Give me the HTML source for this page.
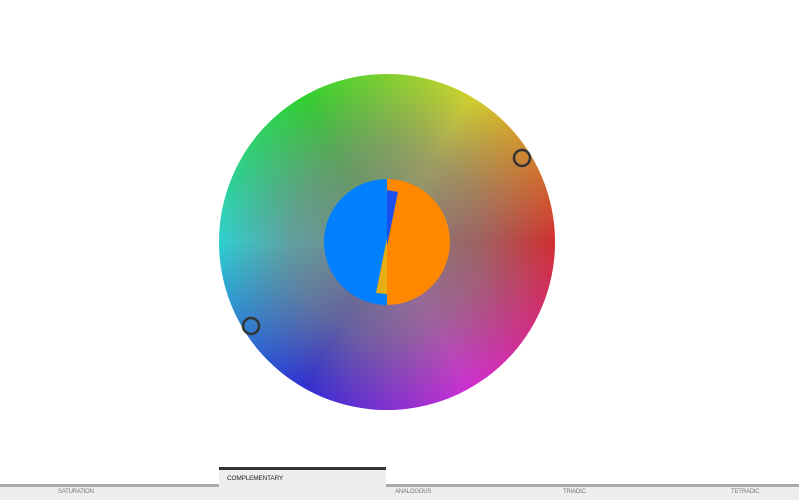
<!DOCTYPE html>
<html><head><meta charset="utf-8"><style>
html,body{margin:0;padding:0;width:799px;height:500px;background:#fff;overflow:hidden;font-family:"Liberation Sans",sans-serif;position:relative}
.wheel{position:absolute;left:219px;top:74px;width:336px;height:336px;border-radius:50%;
background:conic-gradient(from 0deg,hsl(90,100%,50%),hsl(60,100%,50%) 30deg,hsl(30,100%,50%) 60deg,hsl(0,100%,50%) 90deg,hsl(330,100%,50%) 120deg,hsl(300,100%,50%) 150deg,hsl(270,100%,50%) 180deg,hsl(240,100%,50%) 210deg,hsl(210,100%,50%) 240deg,hsl(180,100%,50%) 270deg,hsl(150,100%,50%) 300deg,hsl(120,100%,50%) 330deg,hsl(90,100%,50%) 360deg)}
.wheel::after{content:"";position:absolute;inset:0;border-radius:50%;background:radial-gradient(circle,rgba(128,128,128,1) 0%,rgba(128,128,128,.75) 40%,rgba(128,128,128,0) 100%)}
svg{position:absolute;left:0;top:0}
.bar{position:absolute;left:0;top:484px;width:799px;height:16px;background:#eee;border-top:3px solid #aaa;box-sizing:border-box}
.tab{position:absolute;left:219px;top:467px;width:167px;height:20px;background:#eee;border-top:3px solid #333;box-sizing:border-box}
.tab span{position:absolute;left:8px;top:5px;font-size:6.5px;color:#222;letter-spacing:-.2px}
.l{position:absolute;top:489px;font-size:6px;color:#777;letter-spacing:-.2px}
</style></head><body>
<div class="wheel"></div>
<svg width="799" height="500">
<circle cx="387" cy="242" r="63" fill="#0080ff"/>
<path d="M387 179 A63 63 0 0 1 387 305 Z" fill="#ff8800"/>
<polygon points="387,190 398,192 387,246" fill="#1a4ff0"/>
<polygon points="387,238 376,293 387,294" fill="#e6ae12"/>
<circle cx="522" cy="158" r="8" fill="none" stroke="#333" stroke-width="2.5"/>
<circle cx="251" cy="326" r="8" fill="none" stroke="#333" stroke-width="2.5"/>
</svg>
<div class="bar"></div>
<div class="tab"><span>COMPLEMENTARY</span></div>
<div class="l" style="left:58px">SATURATION</div>
<div class="l" style="left:395px">ANALOGOUS</div>
<div class="l" style="left:563px">TRIADIC</div>
<div class="l" style="left:731px">TETRADIC</div>
</body></html>
